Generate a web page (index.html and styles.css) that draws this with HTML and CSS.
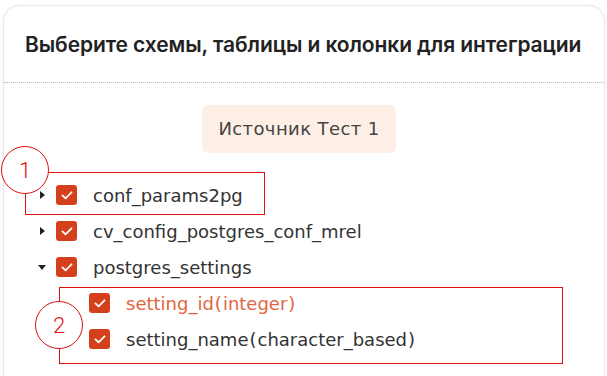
FILE: index.html
```html
<!DOCTYPE html>
<html lang="ru">
<head>
    <meta charset="UTF-8">
    <title>Выбор схем</title>
    <link rel="stylesheet" href="styles.css">
</head>
<body>
    <div class="card">
        <div class="card-header">
            <h2>Выберите схемы, таблицы и колонки для интеграции</h2>
        </div>
        <div class="card-body">
            <div class="source-row">
                <div class="source">Источник Тест 1</div>
            </div>

            <ul class="tree">
                <li class="node">
                    <span class="arrow right"></span>
                    <span class="check"><svg viewBox="0 0 20 20"><path d="M5 10.5l3.4 3.2L15 7"/></svg></span>
                    <span class="name">conf_params2pg</span>
                </li>
                <li class="node">
                    <span class="arrow right"></span>
                    <span class="check"><svg viewBox="0 0 20 20"><path d="M5 10.5l3.4 3.2L15 7"/></svg></span>
                    <span class="name">cv_config_postgres_conf_mrel</span>
                </li>
                <li class="node">
                    <span class="arrow down"></span>
                    <span class="check"><svg viewBox="0 0 20 20"><path d="M5 10.5l3.4 3.2L15 7"/></svg></span>
                    <span class="name">postgres_settings</span>
                </li>
                <li class="node child">
                    <span class="check"><svg viewBox="0 0 20 20"><path d="M5 10.5l3.4 3.2L15 7"/></svg></span>
                    <span class="name active">setting_id<span class="paren">(</span>integer<span class="paren">)</span></span>
                </li>
                <li class="node child">
                    <span class="check"><svg viewBox="0 0 20 20"><path d="M5 10.5l3.4 3.2L15 7"/></svg></span>
                    <span class="name">setting_name<span class="paren">(</span>character_based<span class="paren">)</span></span>
                </li>
            </ul>
        </div>
    </div>

    <!-- annotation marks -->
    <div class="mark-box box-1"></div>
    <div class="mark-num num-1">1</div>
    <div class="mark-box box-2"></div>
    <div class="mark-num num-2">2</div>
</body>
</html>
```

FILE: styles.css
```css
body {
    margin: 0;
    background: #ffffff;
    font-family: "DejaVu Sans", sans-serif;
    color: #333;
    overflow: hidden;
}
.card {
    margin: 5px 2px 0 3px;
    height: 420px;
    background: #fff;
    border: 1px solid #e9e9e9;
    border-radius: 16px;
    box-shadow: 0 0 3px rgba(0,0,0,0.06);
}
.card-header {
    height: 76px;
    display: flex;
    align-items: center;
    padding-left: 21px;
    border-bottom: 1px dotted #b5b5b5;
}
.card-header h2 {
    margin: 0;
    font-family: Inter, sans-serif;
    font-size: 21px;
    font-weight: 600;
    color: #222;
    letter-spacing: -0.1px;
}
.card-body {
    padding-top: 22px;
}
.source-row {
    display: flex;
    justify-content: center;
    padding-right: 10px;
}
.source {
    background: #fdefe5;
    border-radius: 6px;
    padding: 0 16px;
    height: 48px;
    line-height: 48px;
    font-size: 18px;
    letter-spacing: 0.4px;
    color: #444;
}
.tree {
    list-style: none;
    margin: 24px 0 0;
    padding: 0 0 0 33px;
}
.node {
    display: flex;
    align-items: center;
    height: 36px;
}
.node.child {
    padding-left: 52px;
}
.arrow {
    width: 19px;
    display: flex;
    justify-content: flex-start;
}
.arrow::before {
    content: "";
    width: 0;
    height: 0;
    border-style: solid;
}
.arrow.right::before {
    margin-left: 3px;
    border-width: 4px 0 4px 5px;
    border-color: transparent transparent transparent #222;
}
.arrow.down::before {
    margin-left: 1px;
    border-width: 5px 4px 0 4px;
    border-color: #222 transparent transparent transparent;
}
.check {
    width: 21px;
    height: 20px;
    border-radius: 3px;
    background: #d4401b;
    display: flex;
    align-items: center;
    justify-content: center;
    margin-right: 16px;
}
.check svg {
    width: 18px;
    height: 18px;
    fill: none;
    stroke: #fff;
    stroke-width: 2;
    stroke-linecap: round;
    stroke-linejoin: round;
}
.name {
    font-size: 18px;
    color: #333;
}
.name.active {
    color: #e2653f;
}
.paren {
    margin: 0 1px;
}
.mark-box {
    position: absolute;
    border: 1.5px solid #e01010;
}
.box-1 {
    left: 25px;
    top: 172px;
    width: 238px;
    height: 41px;
}
.box-2 {
    left: 59px;
    top: 287px;
    width: 502px;
    height: 75px;
}
.mark-num {
    position: absolute;
    width: 46px;
    height: 46px;
    border: 1.2px solid #e01010;
    border-radius: 50%;
    background: #fff;
    color: #e01010;
    font-family: Roboto, sans-serif;
    font-size: 22px;
    font-weight: 300;
    display: flex;
    align-items: center;
    justify-content: center;
}
.num-1 {
    left: 1px;
    top: 146px;
}
.num-2 {
    left: 35px;
    top: 301px;
}
```
